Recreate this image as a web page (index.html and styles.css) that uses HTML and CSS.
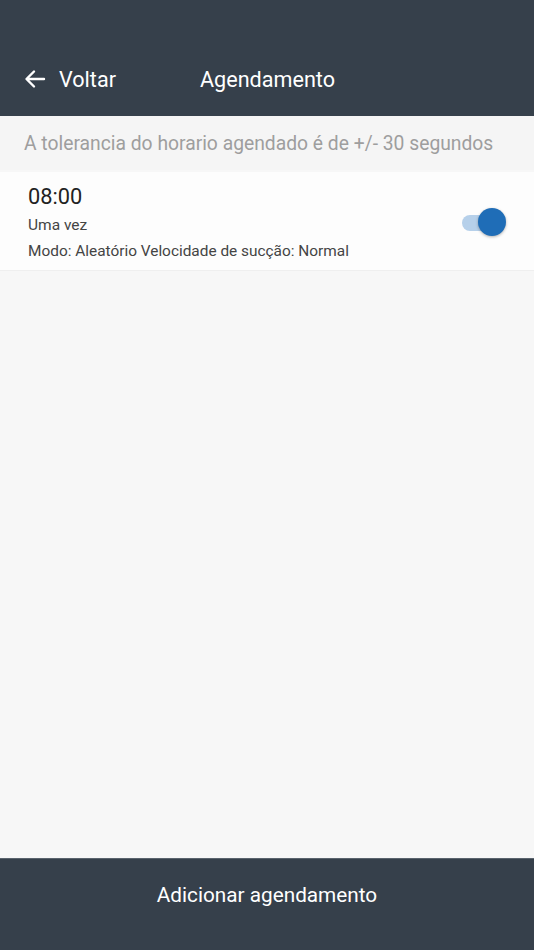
FILE: index.html
```html
<!DOCTYPE html>
<html lang="pt">
<head>
<meta charset="utf-8">
<link rel="stylesheet" href="styles.css">
</head>
<body>
<div class="app">
  <header class="topbar">
    <div class="nav">
      <div class="back">
        <svg class="arrow" width="24" height="24" viewBox="0 0 24 24"><path d="M21 12H4M11 4.5L3.5 12l7.5 7.5" fill="none" stroke="#fff" stroke-width="2.4" stroke-linecap="round" stroke-linejoin="round"/></svg>
        <span class="back-label">Voltar</span>
      </div>
      <div class="title">Agendamento</div>
    </div>
  </header>
  <main class="content">
    <div class="notice">A tolerancia do horario agendado é de +/- 30 segundos</div>
    <div class="item">
      <div class="info">
        <div class="time">08:00</div>
        <div class="repeat">Uma vez</div>
        <div class="mode">Modo: Aleatório Velocidade de sucção: Normal</div>
      </div>
      <div class="switch"><span class="track"></span><span class="knob"></span></div>
    </div>
  </main>
  <footer class="bottombar">
    <div class="add">Adicionar agendamento</div>
  </footer>
</div>
</body>
</html>
```
FILE: styles.css
```css
* { box-sizing: border-box; }
html, body { margin: 0; padding: 0; }
body { font-family: Roboto, "Noto Sans", sans-serif; background: #f7f7f7; }
.app { width: 534px; height: 950px; display: flex; flex-direction: column; }
.topbar { height: 116px; background: #36404b; display: flex; flex-direction: column; justify-content: flex-end; }
.nav { height: 76px; display: flex; align-items: center; padding: 2px 0 0 23px; }
.back { display: flex; align-items: center; width: 177px; }
.arrow { display: block; margin-top: -1px; }
.back-label { color: #fff; font-size: 21.6px; margin-left: 12px; }
.title { color: #fff; font-size: 21.6px; }
.content { flex: 1; background: #f7f7f7; }
.notice { height: 54px; display: flex; align-items: center; padding-left: 24px; color: #9e9e9e; font-size: 19.3px; background: #f5f5f5; }
.item { margin-top: 2px; height: 99px; background: #fdfdfd; display: flex; align-items: center; padding: 0 28px; border-bottom: 1px solid #efefef; }
.info { flex: 1; display: flex; flex-direction: column; padding-top: 3px; }
.time { font-size: 21.8px; color: #222; line-height: 26px; }
.repeat { font-size: 15.5px; color: #444; margin-top: 5px; line-height: 20px; }
.mode { font-size: 15.4px; color: #444; margin-top: 6px; line-height: 20px; }
.switch { position: relative; width: 46px; height: 28px; margin-right: -1px; top: 1px; }
.track { position: absolute; left: 1px; top: 7px; width: 36px; height: 16px; border-radius: 8px; background: #b6d0ea; }
.knob { position: absolute; left: 17px; top: 0; width: 28px; height: 28px; border-radius: 50%; background: #1f6db7; box-shadow: 0 1px 3px rgba(0,0,0,0.3); }
.bottombar { height: 92px; background: #36404b; border-top: 1px solid #5a636d; }
.add { height: 70px; display: flex; align-items: center; justify-content: center; color: #fff; font-size: 20.75px; padding-top: 2px; }
```
